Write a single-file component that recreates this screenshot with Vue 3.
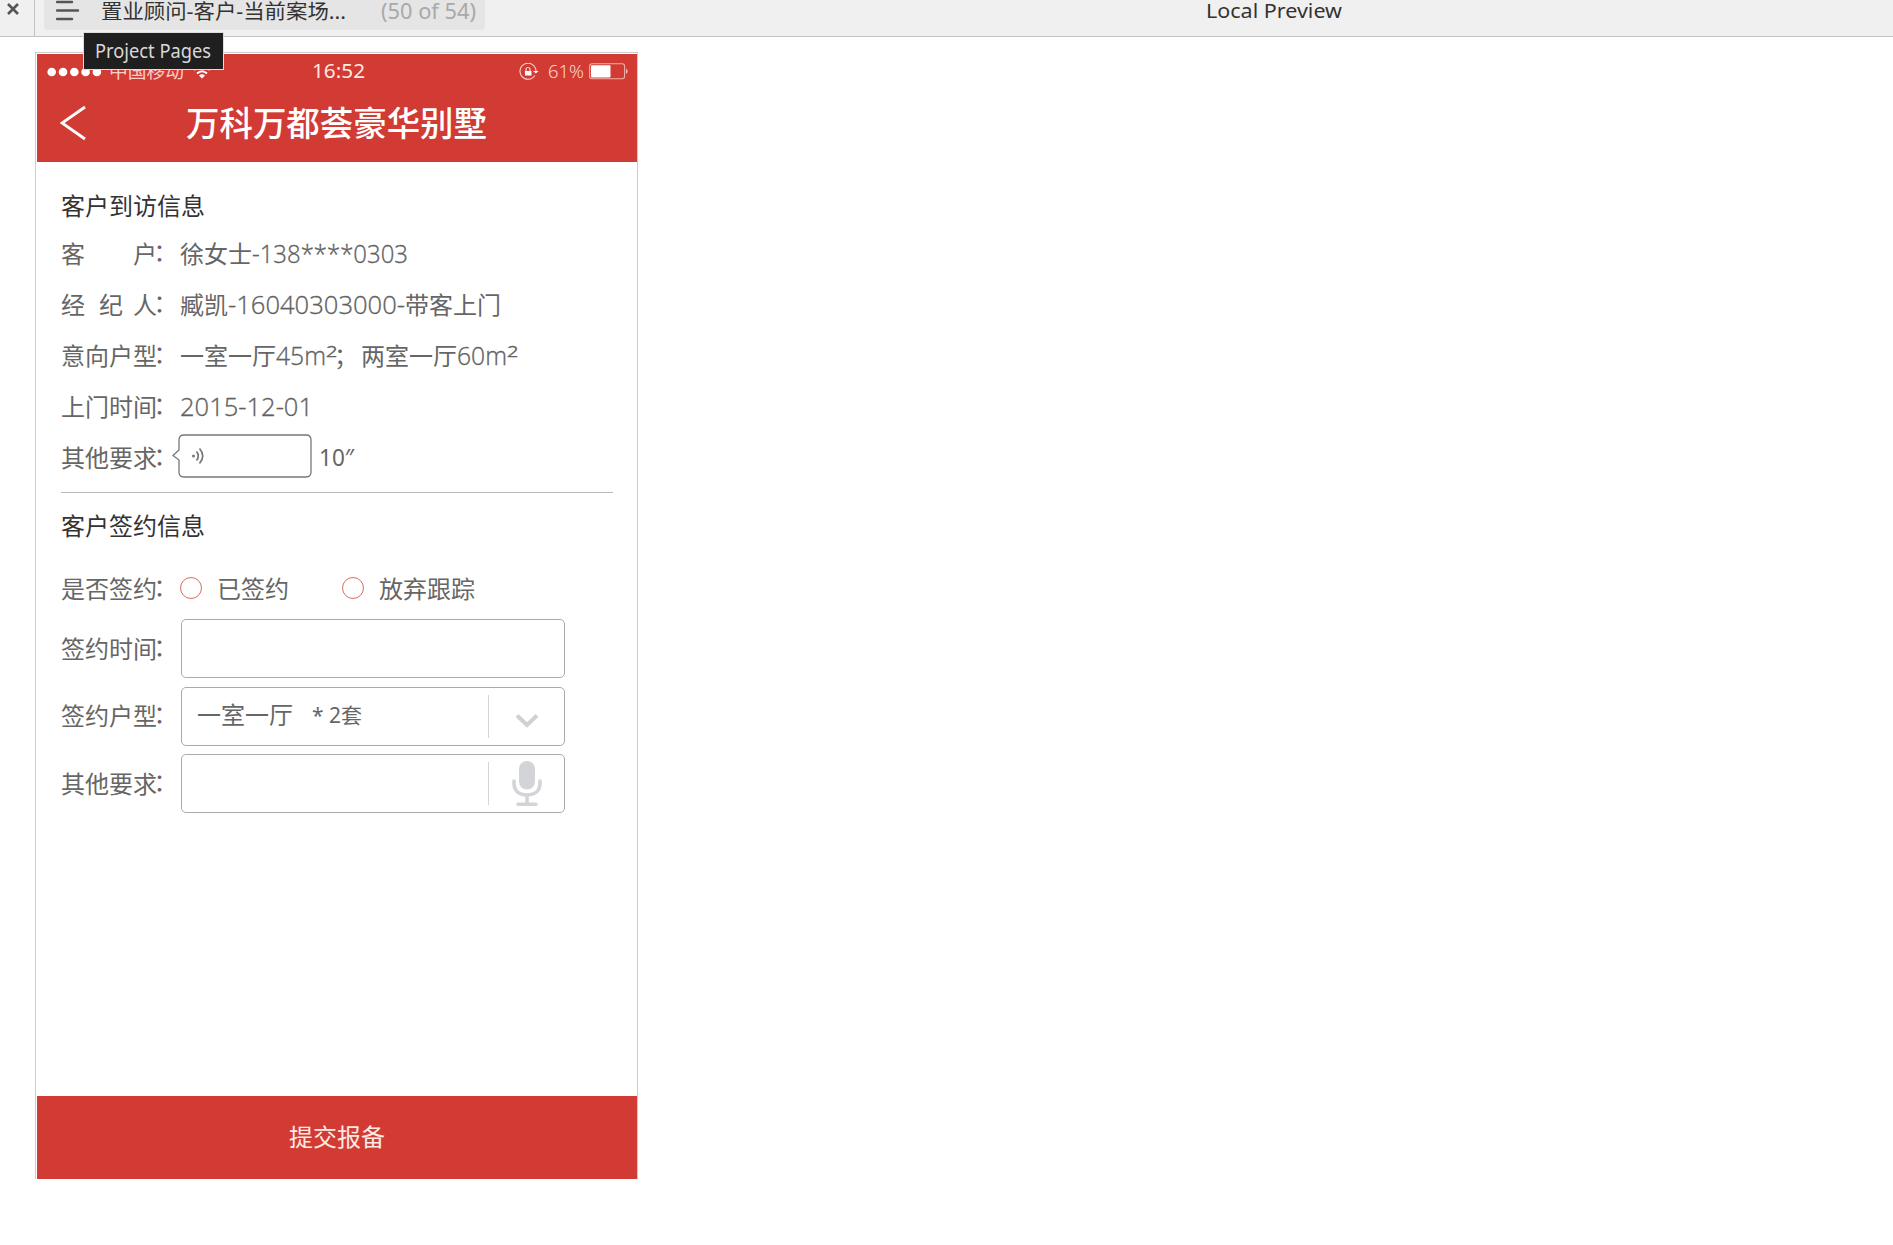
<script setup>
// Squeezes a run of text to a given advance width
const vFit = {
  mounted(el, { value }) {
    const natural = el.getBoundingClientRect().width
    el.style.transform = `scaleX(${value / natural})`
    el.style.marginRight = `${value - natural}px`
  },
}

const visit = [
  { label: [['客', 72], ['户', 24]], value: [['徐女士', 72], ['-138****0303', 156]], height: 50 },
  { label: [['经', 38], ['纪', 34], ['人', 24]], value: [['臧凯', 48], ['-16040303000-', 177], ['带客上门', 96]], height: 52 },
  { label: [['意向户型', 96]], value: [['一室一厅', 96], ['45m', 50], ['²', 11], ['；', 24], ['两室一厅', 96], ['60m', 50], ['²', 11]], height: 50 },
  { label: [['上门时间', 96]], value: [['2015-12-01', 133]], height: 52 },
]
const isCjk = (t) => /[\u3000-\uffff]/.test(t)
</script>

<template>
  <div class="page">
    <header class="topbar">
      <div class="close">
        <svg width="14" height="14" viewBox="0 0 14 14"><path d="M2 2L12 12M12 2L2 12" stroke="#555" stroke-width="2.6" /></svg>
      </div>
      <div class="crumb">
        <svg class="menu" width="24" height="24" viewBox="0 0 24 24"><path d="M1 2H16M1 10.5H22M1 19H16" stroke="#555" stroke-width="2.4" stroke-linecap="round" /></svg>
        <span class="crumb-title"><span v-fit="245" class="fit">置业顾问-客户-当前案场...</span></span>
        <span class="count"><span v-fit="95" class="fit">(50 of 54)</span></span>
      </div>
      <div class="preview"><span v-fit="136" class="fit">Local Preview</span></div>
      <div class="tooltip"><span v-fit="116" class="fit">Project Pages</span></div>
    </header>

    <main class="phone">
      <div class="head">
        <div class="status">
          <svg class="dots" width="56" height="10" viewBox="0 0 56 10"><g fill="#fff"><circle v-for="i in 5" :key="i" :cx="i * 11.3 - 6.6" cy="5" r="4.3" /></g></svg>
          <span class="carrier"><span v-fit="75" class="fit">中国移动</span></span>
          <svg class="wifi" width="18" height="14" viewBox="0 0 18 14"><g fill="none" stroke="#fff" stroke-width="2"><path d="M1 5Q9-2 17 5" /><path d="M4 8.5Q9 4 14 8.5" /></g><path d="M6 10.5Q9 8 12 10.5L9 13.5Z" fill="#fff" /></svg>
          <span class="time"><span v-fit="53" class="fit">16:52</span></span>
          <svg class="lock" width="20" height="18" viewBox="0 0 20 18"><g fill="none" stroke="#ffd3cc"><path d="M15.8 12.5A8 8 0 1 1 17 8" stroke-width="1.1" /><path d="M7 8V6.5a2 2 0 0 1 4 0V8" stroke-width="1.2" /></g><path d="M6 8h6.500v4.600H6zM14 8H19.500l-2.700 2.500z" fill="#fff" /></svg>
          <span class="percent"><span v-fit="36" class="fit">61%</span></span>
          <svg class="battery" width="40" height="17" viewBox="0 0 40 17"><rect x=".6" y=".8" width="35" height="15" rx="2.500" fill="none" stroke="#f3b0a8" stroke-width="1.100" /><rect x="2" y="2.200" width="19.500" height="12.200" rx="1" fill="#fff" /><path d="M37.300 5.500q2.400 2.800 0 5.600z" fill="#fff" /></svg>
        </div>
        <div class="nav">
          <svg class="back" width="27" height="38" viewBox="0 0 27 38"><path d="M25 3L2 19L25 35" fill="none" stroke="#fff" stroke-width="2.800" /></svg>
          <h1><span v-fit="301" class="fit">万科万都荟豪华别墅</span></h1>
        </div>
      </div>

      <section class="visit">
        <h2>客户到访信息</h2>
        <div v-for="(row, r) in visit" :key="r" class="row" :style="{ height: row.height + 'px' }">
          <div class="label"><span v-for="p in row.label" :key="p[0]" :style="{ width: p[1] + 'px' }">{{ p[0] }}</span><span class="colon">：</span></div>
          <div class="value"><span v-for="(p, i) in row.value" :key="i" v-fit="p[1]" class="fit" :class="{ latin: !isCjk(p[0]), semi: p[0] === '；', square: p[0] === '²' }">{{ p[0] }}</span></div>
        </div>
        <div class="row voice">
          <div class="label">其他要求<span class="colon">：</span></div>
          <svg class="bubble" width="142" height="45" viewBox="0 0 142 45"><path d="M12 1H134Q139 1 139 6V38Q139 43 134 43H12Q7 43 7 38V26L1 21.500L7 16V6Q7 1 12 1Z" fill="#fff" stroke="#777" stroke-width="1.300" /><circle cx="21.500" cy="22" r="1.500" fill="#777" /><path d="M24.500 17.500Q28 22 24.500 26.500M27.500 14.500Q34 22 27.500 29.500" fill="none" stroke="#777" stroke-width="1.700" /></svg>
          <span class="seconds"><span v-fit="35" class="fit">10″</span></span>
        </div>
      </section>

      <section class="sign">
        <h2>客户签约信息</h2>
        <div class="row choice">
          <div class="label">是否签约<span class="colon">：</span></div>
          <i class="radio"></i><span class="signed">已签约</span>
          <i class="radio"></i><span>放弃跟踪</span>
        </div>
        <div class="row field">
          <div class="label">签约时间<span class="colon">：</span></div>
          <div class="box"></div>
        </div>
        <div class="row field">
          <div class="label">签约户型<span class="colon">：</span></div>
          <div class="box">
            <span class="kind">一室一厅</span>
            <span class="amount"><span v-fit="50" class="fit">* 2套</span></span>
            <div class="side drop"><svg width="24" height="16" viewBox="0 0 24 16"><path d="M2 2.500L12 12L22 2.500" fill="none" stroke="#d0d1d3" stroke-width="4" /></svg></div>
          </div>
        </div>
        <div class="row field">
          <div class="label">其他要求<span class="colon">：</span></div>
          <div class="box">
            <div class="side mic"><svg width="30" height="46" viewBox="0 0 30 46"><rect x="7" y="0" width="16" height="28.500" rx="8" fill="#d3d4d7" /><path d="M2 20V22C2 30 7 34 15 34S28 30 28 22V20M15 34V43M6 43.200H24" fill="none" stroke="#d3d4d7" stroke-width="3.600" stroke-linecap="round" /></svg></div>
          </div>
        </div>
      </section>

      <button class="submit">提交报备</button>
    </main>
  </div>
</template>

<style>
body { background: #fff; }
</style>

<style scoped>
* { box-sizing: border-box; }
.page {
  width: 1893px;
  height: 1245px;
  overflow: hidden;
  background: #fff;
  color: #666;
  font-family: "Noto Sans", "Noto Sans CJK SC", sans-serif;
}
svg { display: block; flex: none; }
.fit { display: inline-block; white-space: pre; transform-origin: 0 50%; }

.topbar {
  position: relative;
  display: flex;
  height: 37px;
  background: #f0f0f0;
  border-bottom: 1px solid #c4c4c4;
}
.close { width: 35px; padding: 2px 0 0 6px; border-right: 1px solid #c4c4c4; }
.crumb {
  display: flex;
  width: 441px;
  height: 30px;
  margin-left: 9px;
  padding-left: 12px;
  background: #e5e5e5;
  border-radius: 0 0 4px 4px;
}
.crumb-title {
  width: 280px;
  margin-left: 21px;
  color: #333;
  font-size: 20px;
  line-height: 24px;
}
.count { color: #a9a9a9; font-size: 21px; line-height: 22px; }
.preview { margin-left: 721px; color: #333; font-size: 20px; line-height: 21px; }
.tooltip {
  position: absolute;
  left: 83px;
  top: 32px;
  z-index: 2;
  width: 141px;
  height: 38px;
  padding-left: 11px;
  border: 1px solid #ddd;
  background: #1f1f1f;
  color: #d8d8d8;
  font-size: 19.5px;
  line-height: 36px;
}

.phone {
  display: flex;
  flex-direction: column;
  width: 603px;
  height: 1127px;
  margin: 15px 0 0 35px;
  border: 1px solid #ccc;
  border-bottom: 0;
  padding: 1px 0 0 1px;
}
.head { width: 600px; height: 108px; background: #d23a34; color: #fff; }
.status { display: flex; height: 35px; padding-left: 10px; align-items: center; font-size: 19px; line-height: 35px; }
.carrier { width: 84px; margin-left: 6px; font-size: 18px; color: #f8cfc8; }
.time { width: 56px; margin-left: 101px; color: #ffe9e3; }
.lock { margin-left: 151px; }
.percent { width: 41px; margin-left: 9px; color: #ffe3dc; font-family: "Open Sans", sans-serif; font-weight: 300; }
.nav { display: flex; align-items: center; height: 69px; padding-left: 23px; }
.back { margin-top: -2px; }
h1 { margin: -1px 0 0 99px; font-size: 34px; font-weight: 500; line-height: 69px; }

h2 { margin: 0; color: #333; font-size: 24px; font-weight: 400; line-height: 36px; font-family: "Noto Sans CJK SC", sans-serif; }
.visit { margin: 25px 24px 0 24px; height: 306px; border-bottom: 1px solid #bbb; }
.visit h2 { margin-bottom: 5px; }
.row {
  display: flex;
  align-items: center;
  font-family: "Noto Sans CJK SC", sans-serif;
  font-size: 24px;
  white-space: nowrap;
}
.row .label { display: flex; flex: none; width: 119px; line-height: 36px; }
.label span { display: block; flex: none; }
.label .colon { margin: -2px 0 2px -3.5px; }
.value { display: flex; align-items: center; line-height: 36px; }
.latin { font-family: "Open Sans", sans-serif; font-size: 26.5px; font-weight: 300; color: #606060; -webkit-text-stroke: 0.35px #666; }
.square { position: relative; top: 3px; }
.semi { position: relative; left: -3px; }
.voice { height: 49px; }
.bubble { margin-left: -8px; }
.seconds { margin-left: 5px; font-family: "Noto Sans", sans-serif; font-size: 23px; }

.sign { margin: 14px 0 0 24px; }
.choice { height: 51px; margin: 19px 0 6px; }
.radio { width: 22px; height: 22px; margin-right: 15px; border: 1px solid #dc6a64; border-radius: 50%; }
.signed { width: 125px; }
.field { height: 59px; margin-bottom: 8.500px; }
.field .label { width: 120px; margin-top: -2px; }
.box { display: flex; align-items: center; width: 384px; height: 59px; border: 1px solid #aaa; border-radius: 5px; }
.kind { width: 115px; margin: -4px 0 0 15px; line-height: 36px; }
.amount { margin-top: -4px; font-family: "Noto Sans", "Noto Sans CJK SC", sans-serif; font-size: 21px; }
.side { display: flex; align-items: center; justify-content: center; width: 76px; height: 43px; margin-left: auto; border-left: 1px solid #d5d5d5; }
.drop { padding-top: 9px; }
.submit {
  width: 600px;
  height: 83px;
  margin-top: auto;
  padding: 0;
  border: 0;
  background: #d23a34;
  color: #ffe9e3;
  font: 24px/36px "Noto Sans CJK SC", sans-serif;
  padding-bottom: 3px;
}
</style>
